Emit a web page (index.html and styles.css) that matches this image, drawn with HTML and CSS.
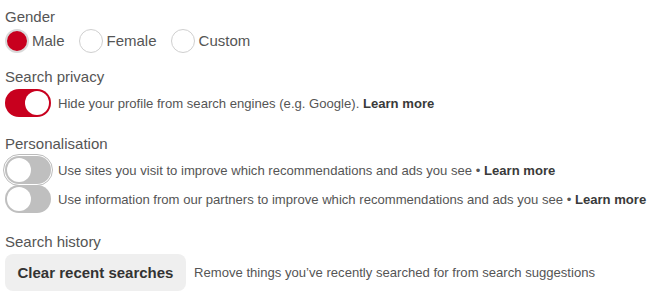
FILE: index.html
```html
<!DOCTYPE html>
<html>
<head>
<meta charset="utf-8">
<link rel="stylesheet" href="styles.css">
</head>
<body>
<div class="page">
  <section class="sec sec-gender">
    <div class="label">Gender</div>
    <div class="radios">
      <label class="radio"><span class="dot on"></span><span>Male</span></label>
      <label class="radio"><span class="dot"></span><span>Female</span></label>
      <label class="radio"><span class="dot"></span><span>Custom</span></label>
    </div>
  </section>

  <section class="sec sec-privacy">
    <div class="label">Search privacy</div>
    <div class="row">
      <span class="toggle on"><span class="knob"></span></span>
      <span class="desc">Hide your profile from search engines (e.g. Google). <b>Learn more</b></span>
    </div>
  </section>

  <section class="sec sec-person">
    <div class="label">Personalisation</div>
    <div class="row">
      <span class="toggle focus"><span class="knob"></span></span>
      <span class="desc">Use sites you visit to improve which recommendations and ads you see • <b>Learn more</b></span>
    </div>
    <div class="row">
      <span class="toggle"><span class="knob"></span></span>
      <span class="desc">Use information from our partners to improve which recommendations and ads you see • <b>Learn more</b></span>
    </div>
  </section>

  <section class="sec sec-history">
    <div class="label">Search history</div>
    <div class="row hist">
      <button class="btn">Clear recent searches</button>
      <span class="desc">Remove things you’ve recently searched for from search suggestions</span>
    </div>
  </section>
</div>
</body>
</html>
```
FILE: styles.css
```css
html, body {
  margin: 0;
  padding: 0;
  background: #fff;
}
body {
  font-family: "Liberation Sans", Arial, sans-serif;
  color: #555;
}
.page {
  padding: 8px 5px 0 5px;
}
.label {
  font-size: 15px;
  line-height: 18px;
  height: 18px;
  color: #555;
}
.sec-gender .radios {
  display: flex;
  align-items: center;
  gap: 14px;
  margin-top: 2px;
  height: 25px;
}
.radio {
  display: flex;
  align-items: center;
  font-size: 15px;
  color: #555;
}
.dot {
  box-sizing: border-box;
  width: 24px;
  height: 24px;
  border-radius: 50%;
  border: 1.5px solid #cfcfcf;
  background: #fff;
  margin-right: 3px;
}
.dot.on {
  background: #c8001e;
  border: 2px solid #d9d9d9;
}
.radio .dot:not(.on) { margin-right: 4px; }
.sec-privacy { margin-top: 15px; }
.sec-person { margin-top: 18px; }
.sec-history { margin-top: 20px; }

.row {
  display: flex;
  align-items: center;
  height: 28px;
  margin-top: 3px;
}
.sec-person .row + .row { margin-top: 1px; }
.toggle {
  box-sizing: border-box;
  position: relative;
  width: 46px;
  height: 28px;
  border-radius: 14px;
  background: #bfbfbf;
  flex: none;
  margin-right: 7px;
}
.toggle .knob {
  position: absolute;
  box-sizing: border-box;
  top: 2px;
  left: 2px;
  width: 24px;
  height: 24px;
  border-radius: 50%;
  background: #fff;
}
.toggle.on {
  background: #c8001e;
}
.toggle.on .knob {
  left: auto;
  right: 2px;
}
.toggle.focus {
  outline: 1px solid #bcbcbc;
  outline-offset: 1px;
}
.desc {
  font-size: 13.1px;
  color: #555;
  white-space: nowrap;
}
.desc b {
  color: #3a3a3a;
  font-weight: bold;
}
.row.hist {
  height: 37px;
}
.btn {
  font-family: "Liberation Sans", Arial, sans-serif;
  font-size: 15px;
  font-weight: bold;
  color: #333;
  background: #efefef;
  border: none;
  border-radius: 8px;
  height: 37px;
  width: 181px;
  padding: 0;
  margin-right: 8px;
}
```
